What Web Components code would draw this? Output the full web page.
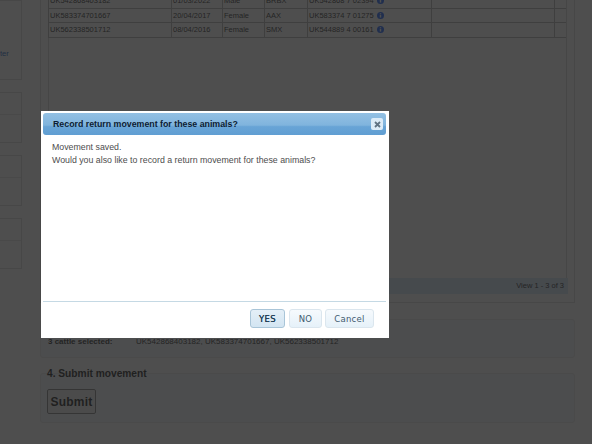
<!DOCTYPE html>
<html>
<head>
<meta charset="utf-8">
<style>
  html, body { margin: 0; height: 100%; overflow: hidden; background: #fff; }
  body { font-family: "Liberation Sans", Arial, sans-serif; }
</style>
</head>
<body>
<movement-page></movement-page>
<modal-overlay>
  <record-dialog title="Record return movement for these animals?">
    <p>Movement saved.</p>
    <p>Would you also like to record a return movement for these animals?</p>
    <dialog-button slot="buttons" primary>YES</dialog-button>
    <dialog-button slot="buttons">NO</dialog-button>
    <dialog-button slot="buttons" wide>Cancel</dialog-button>
  </record-dialog>
</modal-overlay>

<script>
class SideBox extends HTMLElement {
    constructor() {
        super();
        this.attachShadow({ mode: 'open' });
        this.shadowRoot.innerHTML = `
        <style>
            :host {
                display: block;
                box-sizing: border-box;
                height: var(--h, 51px);
                border: 1px solid #d8d8d8;
                border-left: 0;
                font-size: 7.6px;
                line-height: 9px;
                color: #0050c0;
                padding: var(--pad, 0);
            }
            .split { height: 21px; border-bottom: 1px solid #e2e2e2; }
        </style>
        <div class="split" style="display:var(--split, block)"></div>
        <slot></slot>`;
    }
}

class AnimalGrid extends HTMLElement {
    constructor() {
        super();
        this.attachShadow({ mode: 'open' });
        const rows = [
            ['UK542868403182', '01/03/2022', 'Male', 'BRBX', 'UK542868 7 02394'],
            ['UK583374701667', '20/04/2017', 'Female', 'AAX', 'UK583374 7 01275'],
            ['UK562338501712', '08/04/2016', 'Female', 'SMX', 'UK544889 4 00161']
        ];
        const info = `<svg width="7" height="7" viewBox="0 0 8 8"><circle cx="4" cy="4" r="4" fill="#0050ff"/><rect x="3.2" y="3.4" width="1.6" height="3" fill="#fff"/><rect x="3.2" y="1.4" width="1.6" height="1.3" fill="#fff"/></svg>`;
        this.shadowRoot.innerHTML = `
        <style>
            :host { display: block; margin-left: -1px; }
            .row {
                display: grid;
                grid-template-columns: 123px 51px 42px 43px 124px 124px;
                height: 14.5px;
                box-sizing: border-box;
                border-bottom: 1px solid #acacac;
                font-size: 7.5px;
                line-height: 14px;
                color: #111;
            }
            .row > div {
                box-sizing: border-box;
                padding-left: 1px;
                border-left: 1px solid #acacac;
                white-space: nowrap;
                overflow: hidden;
            }
            .row > div:last-child { border-right: 1px solid #acacac; }
            svg { vertical-align: -1px; margin-left: 1px; }
        </style>
        ${rows.map(r => `
        <div class="row">
            <div>${r[0]}</div><div>${r[1]}</div><div>${r[2]}</div><div>${r[3]}</div>
            <div>${r[4]} ${info}</div><div></div>
        </div>`).join('')}`;
    }
}

class PageSection extends HTMLElement {
    constructor() {
        super();
        this.attachShadow({ mode: 'open' });
        this.shadowRoot.innerHTML = `
        <style>
            :host {
                display: block;
                box-sizing: border-box;
                background: #f4f9ff;
                border: 1px solid #e6e6e6;
                border-radius: 3px;
            }
        </style>
        <slot></slot>`;
    }
}

class MovementPage extends HTMLElement {
    constructor() {
        super();
        this.attachShadow({ mode: 'open' });
        this.shadowRoot.innerHTML = `
        <style>
            :host {
                display: grid;
                grid-template-columns: 22px 1fr;
                column-gap: 18px;
                width: 592px;
                height: 444px;
                overflow: hidden;
                color: #000;
            }
            .side {
                display: flex;
                flex-direction: column;
                gap: 12px;
            }
            .main { padding-right: 17px; }
            .grid-box {
                box-sizing: border-box;
                height: 316px;
                margin-top: -13px;
                border: 1px solid #d8d8d8;
                padding: 6px 7px 8px 7px;
                display: flex;
                flex-direction: column;
            }
            .grid-scroll { flex: 1; border-left: 1px solid #d0d0d0; border-right: 1px solid #d0d0d0; }
            .pager {
                height: 16px;
                margin: 0 -1px;
                background: #d0e6fa;
                font-size: 7.5px;
                line-height: 16px;
                text-align: right;
                padding-right: 4px;
                color: #111;
            }
            .selected {
                margin-top: 16px;
                height: 39px;
                padding: 17px 0 0 7px;
                box-sizing: border-box;
                display: flex;
                font-size: 8px;
                line-height: 10px;
                color: #111;
            }
            .selected b { width: 88px; }
            .submit {
                margin-top: 15px;
                height: 50px;
                padding: 0 6px;
                box-sizing: border-box;
            }
            h2 {
                margin: -7px 0 8px 0;
                font-size: 10.2px;
                line-height: 14px;
                color: #000;
            }
            button {
                display: block;
                width: 49px;
                height: 25px;
                padding: 0;
                font: bold 12px "Liberation Sans", Arial, sans-serif;
                letter-spacing: .2px;
                color: #000;
                background: #efefef;
                border: 1px solid #767676;
                border-radius: 2px;
            }
        </style>
        <div class="side">
            <side-box style="--h:80px;--pad:48px 0 0 0;--split:none">ter</side-box>
            <side-box></side-box>
            <side-box></side-box>
            <side-box></side-box>
        </div>
        <div class="main">
            <div class="grid-box">
                <div class="grid-scroll"><animal-grid></animal-grid></div>
                <div class="pager">View 1 - 3 of 3</div>
            </div>
            <page-section class="selected">
                <b>3 cattle selected:</b>
                <span>UK542868403182, UK583374701667, UK562338501712</span>
            </page-section>
            <page-section class="submit">
                <h2>4. Submit movement</h2>
                <button>Submit</button>
            </page-section>
        </div>`;
    }
}

class ModalOverlay extends HTMLElement {
    constructor() {
        super();
        this.attachShadow({ mode: 'open' });
        this.shadowRoot.innerHTML = `
        <style>
            :host {
                position: fixed;
                inset: 0;
                background: rgba(39, 39, 39, .82);
                display: flex;
                align-items: flex-start;
                justify-content: flex-start;
            }
            .place { margin: 111px 0 0 41px; }
        </style>
        <div class="place"><slot></slot></div>`;
    }
}

class RecordDialog extends HTMLElement {
    constructor() {
        super();
        this.attachShadow({ mode: 'open' });
        this.shadowRoot.innerHTML = `
        <style>
            :host {
                display: flex;
                flex-direction: column;
                box-sizing: border-box;
                width: 348px;
                height: 227px;
                padding: 2px 3px 0 2px;
                background: #fff;
                font-size: 8.8px;
                color: #4d4d4d;
            }
            .title {
                display: flex;
                align-items: center;
                justify-content: space-between;
                box-sizing: border-box;
                height: 22px;
                padding: 0 3px 0 10px;
                border-radius: 3px;
                background: linear-gradient(#93c0e3, #80b4dd 55%, #68a4d6 62%, #609ed2);
                font-weight: bold;
                font-size: 8.8px;
                color: #0c1c33;
            }
            .close {
                box-sizing: border-box;
                width: 12px;
                height: 12px;
                border-radius: 2px;
                background: #dcebf7;
                display: flex;
                align-items: center;
                justify-content: center;
            }
            .body {
                flex: 1;
                padding: 6px 8px 0 9px;
                line-height: 13px;
                border-bottom: 1px solid #c5d9e4;
            }
            ::slotted(p) { margin: 0; }
            .buttons {
                display: flex;
                justify-content: flex-end;
                gap: 3px;
                height: 36px;
                padding: 7px 12px 0 0;
                box-sizing: border-box;
            }
        </style>
        <div class="title">
            <span>${this.getAttribute('title')}</span>
            <span class="close"><svg width="7" height="7" viewBox="0 0 7 7"><path d="M1 1l5 5M6 1l-5 5" stroke="#5f7282" stroke-width="1.8"/></svg></span>
        </div>
        <div class="body"><slot></slot></div>
        <div class="buttons"><slot name="buttons"></slot></div>`;
    }
}

class DialogButton extends HTMLElement {
    constructor() {
        super();
        this.attachShadow({ mode: 'open' });
        this.shadowRoot.innerHTML = `
        <style>
            :host {
                display: flex;
                align-items: center;
                justify-content: center;
                box-sizing: border-box;
                width: 33px;
                height: 19px;
                border: 1px solid #dbe6ee;
                border-radius: 3px;
                background: linear-gradient(#f6fafd, #e6f1f9);
                font: 8.5px "DejaVu Sans", sans-serif;
                letter-spacing: .3px;
                color: #3f5b70;
            }
            :host([primary]) {
                width: 35px;
                margin-right: 1px;
                border-color: #a9c5d8;
                background: linear-gradient(#e4eff7, #d3e5f2);
                color: #1f3d55;
                text-shadow: 0 0 .6px #1f3d55;
            }
            :host([wide]) { width: 49px; }
        </style>
        <slot></slot>`;
    }
}

customElements.define('side-box', SideBox);
customElements.define('animal-grid', AnimalGrid);
customElements.define('page-section', PageSection);
customElements.define('movement-page', MovementPage);
customElements.define('modal-overlay', ModalOverlay);
customElements.define('record-dialog', RecordDialog);
customElements.define('dialog-button', DialogButton);
</script>
</body>
</html>
